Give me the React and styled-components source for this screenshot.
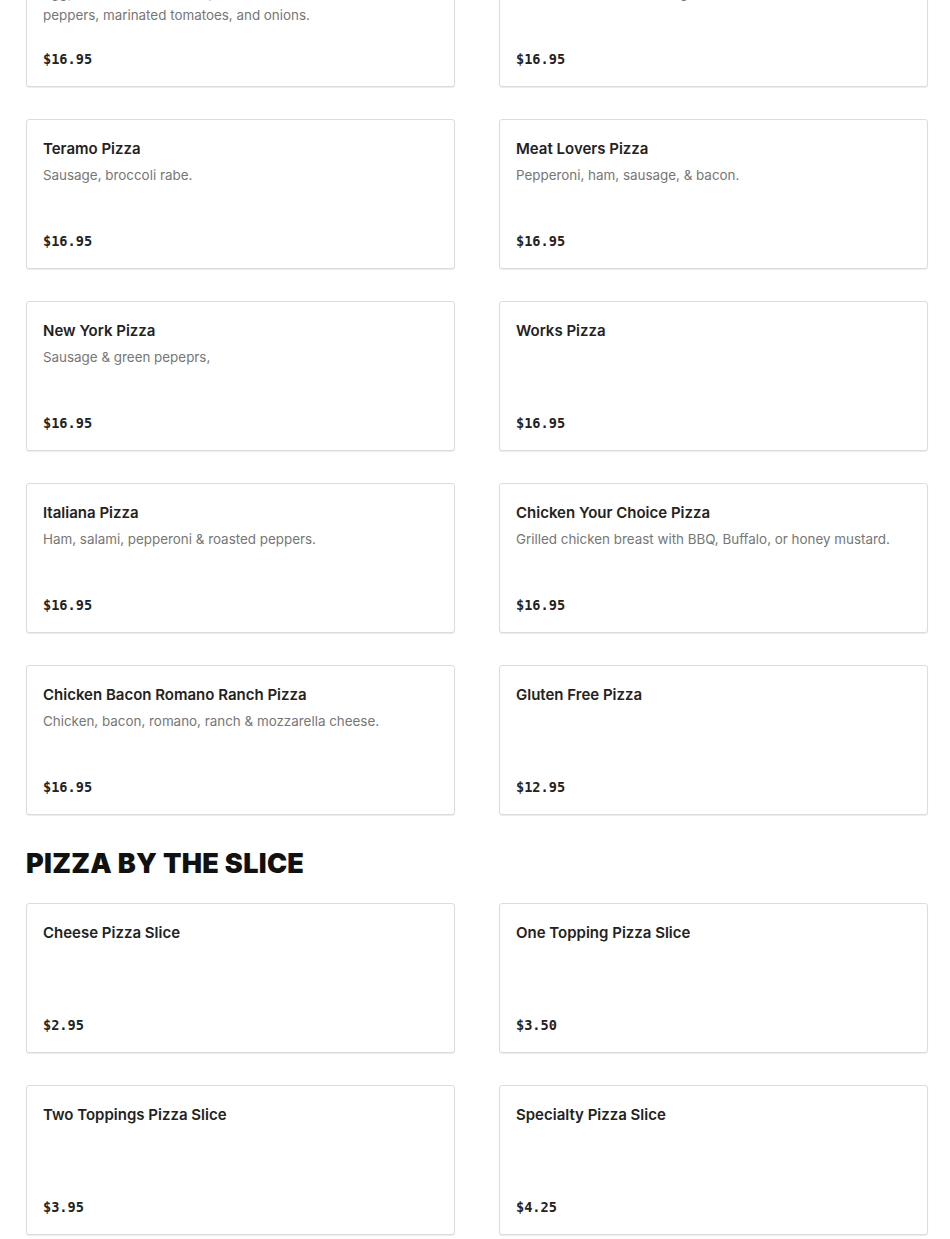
import React from 'react';
import styled, { createGlobalStyle } from 'styled-components';

const GlobalStyle = createGlobalStyle`
  body {
    margin: 0;
    background: #fff;
    font-family: Inter, "Noto Sans", sans-serif;
    color: #222;
  }
`;

// the reference is scrolled part way down the menu
const Page = styled.div`
  padding: 0 22px 40px 26px;
  margin-top: -63px;
`;

const Grid = styled.div`
  display: grid;
  grid-template-columns: 429px 429px;
  column-gap: 44px;
  row-gap: 32px;
`;

const Card = styled.div`
  display: flex;
  flex-direction: column;
  min-height: 150px;
  box-sizing: border-box;
  padding: 17px 16px 15px 16px;
  border: 1px solid #dcdcdc;
  border-radius: 3px;
  box-shadow: 0 1px 1px rgba(0, 0, 0, 0.08);
  background: #fff;
`;

const Title = styled.div`
  font-size: 15px;
  font-weight: 600;
  line-height: 24px;
  color: #222;
`;

const Desc = styled.div`
  margin-top: 3px;
  font-size: 13.4px;
  line-height: 22px;
  color: #767676;
`;

const Price = styled.div`
  margin-top: auto;
  font-family: "DejaVu Sans Mono", "Liberation Mono", monospace;
  font-weight: bold;
  font-size: 13.6px;
  line-height: 24px;
  color: #222;
`;

const SectionTitle = styled.h2`
  margin: 34px 0 24px 0;
  font-family: Inter, "Liberation Sans", sans-serif;
  font-weight: 900;
  font-size: 27px;
  line-height: 30px;
  letter-spacing: 0.3px;
  text-transform: uppercase;
  color: #111;
`;

const specialty = [
  { name: 'Veggie Pizza', desc: 'Eggplant, fresh broccoli, spinach, mushrooms, roasted red peppers, marinated tomatoes, and onions.', price: '$16.95' },
  { name: 'White Pizza', desc: 'Ricotta, mozzarella, fresh garlic & olive oil.', price: '$16.95' },
  { name: 'Teramo Pizza', desc: 'Sausage, broccoli rabe.', price: '$16.95' },
  { name: 'Meat Lovers Pizza', desc: 'Pepperoni, ham, sausage, & bacon.', price: '$16.95' },
  { name: 'New York Pizza', desc: 'Sausage & green pepeprs,', price: '$16.95' },
  { name: 'Works Pizza', desc: '', price: '$16.95' },
  { name: 'Italiana Pizza', desc: 'Ham, salami, pepperoni & roasted peppers.', price: '$16.95' },
  { name: 'Chicken Your Choice Pizza', desc: 'Grilled chicken breast with BBQ, Buffalo, or honey mustard.', price: '$16.95' },
  { name: 'Chicken Bacon Romano Ranch Pizza', desc: 'Chicken, bacon, romano, ranch & mozzarella cheese.', price: '$16.95' },
  { name: 'Gluten Free Pizza', desc: '', price: '$12.95' },
];

const slices = [
  { name: 'Cheese Pizza Slice', price: '$2.95' },
  { name: 'One Topping Pizza Slice', price: '$3.50' },
  { name: 'Two Toppings Pizza Slice', price: '$3.95' },
  { name: 'Specialty Pizza Slice', price: '$4.25' },
];

function MenuItem({ item }) {
  return (
    <Card>
      <Title>{item.name}</Title>
      {item.desc ? <Desc>{item.desc}</Desc> : null}
      <Price>{item.price}</Price>
    </Card>
  );
}

export default function App() {
  return (
    <>
      <GlobalStyle />
      <Page>
        <Grid>
          {specialty.map((item) => <MenuItem key={item.name} item={item} />)}
        </Grid>
        <SectionTitle>Pizza by the slice</SectionTitle>
        <Grid>
          {slices.map((item) => <MenuItem key={item.name} item={item} />)}
        </Grid>
      </Page>
    </>
  );
}
